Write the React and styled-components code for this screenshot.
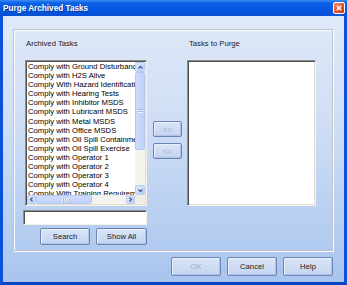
import styled, { createGlobalStyle } from 'styled-components';

const GlobalStyle = createGlobalStyle`
html, body {
  margin: 0;
  padding: 0;
  background: #ffffff;
}
#root {
  width: 347px;
  height: 285px;
}
`

const Window = styled.div`
width: 347px;
height: 285px;
box-sizing: border-box;
display: flex;
flex-direction: column;
font-family: "Liberation Sans", Arial, sans-serif;
font-size: 7.7px;
color: #111;
`

const TitleBar = styled.div`
height: 16px;
flex: none;
display: flex;
align-items: center;
justify-content: space-between;
padding: 0 2px 0 3px;
background: linear-gradient(#3b8ef7 0%, #0c62e6 18%, #0558e4 60%, #064fd4 100%);
`

const TitleText = styled.span`
color: #ffffff;
font-weight: bold;
font-size: 8.2px;
text-shadow: 1px 1px 0 #0a3a9a;
`

const CloseButton = styled.div`
width: 10px;
height: 10px;
border: 1px solid #ffffff;
border-radius: 2px;
background: linear-gradient(135deg, #f08a64, #d9482a 70%, #c63a20);
display: flex;
align-items: center;
justify-content: center;
`

const Body = styled.div`
flex: 1;
min-height: 0;
display: flex;
flex-direction: column;
border-left: 3px solid #0a52dc;
border-right: 3px solid #0a52dc;
border-bottom: 3px solid #0846c4;
padding: 13px 11px 0 10px;
background: linear-gradient(#dfe9f8 0%, #cfdef5 40%, #a9c5ee 100%);
`

const GroupBox = styled.div`
height: 222px;
flex: none;
box-sizing: border-box;
border: 1px solid #c2c6cc;
box-shadow: inset 1px 1px 0 #f6f9fd, 1px 1px 0 #f6f9fd;
padding: 9px 0 0 9px;
display: flex;
`

const Column = styled.div`
width: ${(p) => p.$width}px;
margin-right: ${(p) => p.$gap || 0}px;
display: flex;
flex-direction: column;
`

const Label = styled.div`
height: 10px;
line-height: 10px;
margin-left: ${(p) => p.$indent}px;
color: #1a1a1a;
`

const ListBox = styled.div`
margin-top: 11px;
margin-left: ${(p) => p.$indent || 0}px;
height: 146px;
box-sizing: border-box;
border-style: solid;
border-width: 1px;
border-color: #8d8d8d #f4f2ea #f4f2ea #8d8d8d;
box-shadow: inset 1px 1px 0 #505050, inset -1px -1px 0 #e2ded2;
background: #ffffff;
padding: 1px;
display: grid;
grid-template-columns: ${(p) => (p.$scroll ? '1fr 10px' : '1fr')};
grid-template-rows: ${(p) => (p.$scroll ? '1fr 9px' : '1fr')};
overflow: hidden;
`

const Items = styled.div`
overflow: hidden;
padding: 0 0 0 1px;
`

const Item = styled.div`
height: 9.1px;
line-height: 9.1px;
white-space: nowrap;
color: #000;
`

const ScrollTrack = styled.div`
background: #f4f3ee;
display: flex;
flex-direction: ${(p) => (p.$horizontal ? 'row' : 'column')};
`

const ScrollArrow = styled.div`
flex: none;
width: ${(p) => (p.$horizontal ? '9px' : '10px')};
height: ${(p) => (p.$horizontal ? '9px' : '10px')};
box-sizing: border-box;
border: 1px solid #b9cdf6;
border-radius: 2px;
background: linear-gradient(135deg, #dbe6fd, #bccffa);
display: flex;
align-items: center;
justify-content: center;
`

const Thumb = styled.div`
flex: none;
${(p) => (p.$horizontal ? `width: ${p.$size}px; height: 9px;` : `height: ${p.$size}px; width: 10px;`)}
box-sizing: border-box;
border: 1px solid #b3c8f6;
border-radius: 2px;
background: ${(p) => (p.$horizontal ? 'linear-gradient(#cfdcfc, #bfd0fa)' : 'linear-gradient(90deg, #cfdcfc, #bfd0fa)')};
display: flex;
align-items: center;
justify-content: center;
`

const Grip = styled.div`
width: 5px;
height: 4px;
background: repeating-linear-gradient(${(p) => (p.$horizontal ? '90deg' : '0deg')}, #eef3fe 0 1px, #9fb5e8 1px 2px);
`

const Spacer = styled.div`
flex: 1;
`

const Corner = styled.div`
background: #f0ede2;
`

const TextBox = styled.div`
margin-top: 4px;
height: 15px;
box-sizing: border-box;
border-style: solid;
border-width: 1px;
border-color: #8d8d8d #f4f2ea #f4f2ea #8d8d8d;
box-shadow: inset 1px 1px 0 #505050;
background: #ffffff;
`

const ButtonRow = styled.div`
margin-top: 3px;
display: flex;
justify-content: flex-end;
gap: 6px;
`

const Button = styled.button`
width: ${(p) => p.$width || 50}px;
height: ${(p) => p.$height || 17}px;
padding: 0;
box-sizing: border-box;
border: 1px solid #6a83b4;
border-radius: 2px;
background: linear-gradient(#d9e4f7, #c3d4f0);
box-shadow: inset 1px 1px 0 #eaf0fb, inset -1px -1px 0 #b2c4e6;
font-family: "Liberation Sans", Arial, sans-serif;
font-size: 7.7px;
color: ${(p) => (p.disabled ? '#a3afc4' : '#1a1a1a')};
`

const MoveButtons = styled.div`
margin-top: 82px;
display: flex;
flex-direction: column;
gap: 6px;
`

const Footer = styled.div`
margin-top: 6px;
display: flex;
justify-content: flex-end;
gap: 6px;
`

const tasks = [
  'Comply with Ground Disturbance',
  'Comply with H2S Alive',
  'Comply With Hazard Identification',
  'Comply with Hearing Tests',
  'Comply with Inhibitor MSDS',
  'Comply with Lubricant MSDS',
  'Comply with Metal MSDS',
  'Comply with Office MSDS',
  'Comply with Oil Spill Containment',
  'Comply with Oil Spill Exercise',
  'Comply with Operator 1',
  'Comply with Operator 2',
  'Comply with Operator 3',
  'Comply with Operator 4',
  'Comply With Training Requirements',
];

function Chevron({ dir }) {
  const paths = {
    up: 'M1.5 4.5 L3.5 2.5 L5.5 4.5',
    down: 'M1.5 2.5 L3.5 4.5 L5.5 2.5',
    left: 'M4.5 1.5 L2.5 3.5 L4.5 5.5',
    right: 'M2.5 1.5 L4.5 3.5 L2.5 5.5',
  };
  return (
    <svg width="7" height="7" viewBox="0 0 7 7">
      <path d={paths[dir]} fill="none" stroke="#4d6185" strokeWidth="1.3" />
    </svg>
  );
}

function App() {
  return (
    <Window>
      <GlobalStyle />
      <TitleBar>
        <TitleText>Purge Archived Tasks</TitleText>
        <CloseButton>
          <svg width="6" height="6" viewBox="0 0 6 6">
            <path d="M0.8 0.8 L5.2 5.2 M5.2 0.8 L0.8 5.2" stroke="#fff" strokeWidth="1.4" />
          </svg>
        </CloseButton>
      </TitleBar>
      <Body>
        <GroupBox>
          <Column $width={124} $gap={6}>
            <Label $indent={3}>Archived Tasks</Label>
            <ListBox $indent={2} $scroll>
              <Items>
                {tasks.map((t) => (
                  <Item key={t}>{t}</Item>
                ))}
              </Items>
              <ScrollTrack>
                <ScrollArrow><Chevron dir="up" /></ScrollArrow>
                <Thumb $size={78}><Grip /></Thumb>
                <Spacer />
                <ScrollArrow><Chevron dir="down" /></ScrollArrow>
              </ScrollTrack>
              <ScrollTrack $horizontal>
                <ScrollArrow $horizontal><Chevron dir="left" /></ScrollArrow>
                <Thumb $horizontal $size={56}><Grip $horizontal /></Thumb>
                <Spacer />
                <ScrollArrow $horizontal><Chevron dir="right" /></ScrollArrow>
              </ScrollTrack>
              <Corner />
            </ListBox>
            <TextBox />
            <ButtonRow>
              <Button>Search</Button>
              <Button $width={51}>Show All</Button>
            </ButtonRow>
          </Column>
          <Column $width={29} $gap={5}>
            <MoveButtons>
              <Button $width={29} $height={16} disabled>&gt;&gt;</Button>
              <Button $width={29} $height={16} disabled>&lt;&lt;</Button>
            </MoveButtons>
          </Column>
          <Column $width={129}>
            <Label $indent={2}>Tasks to Purge</Label>
            <ListBox />
          </Column>
        </GroupBox>
        <Footer>
          <Button $height={19} disabled>OK</Button>
          <Button $height={19}>Cancel</Button>
          <Button $height={19}>Help</Button>
        </Footer>
      </Body>
    </Window>
  );
}

export default App;
